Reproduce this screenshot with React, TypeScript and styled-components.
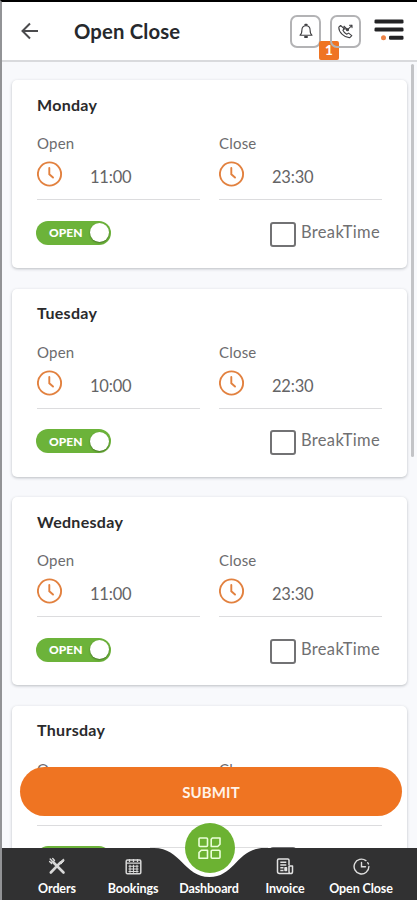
import React from "react";
import styled, { createGlobalStyle } from "styled-components";

const Global = createGlobalStyle`
  * { box-sizing: border-box; }
  html, body { margin: 0; padding: 0; overflow: hidden; }
  body { font-family: Lato, "Open Sans", sans-serif; background: #f8f9fc; }
  button { font-family: inherit; border: 0; padding: 0; background: none; }
`;

const Screen = styled.div`
  position: relative;
  display: flex;
  flex-direction: column;
  width: 417px;
  height: 900px;
  overflow: hidden;
  border-top: 2px solid #000;
  border-left: 2px solid #929396;
  background: #f8f9fc;
`;

const Header = styled.header`
  display: flex;
  align-items: center;
  flex: none;
  height: 60px;
  padding: 0 13px 0 18px;
  background: #fff;
  border-bottom: 2px solid #d9dadd;
`;

const BackButton = styled.button`
  display: flex;
  width: 20px;
  height: 20px;
`;

const PageTitle = styled.h1`
  flex: 1;
  margin: 0 0 0 34px;
  font-size: 20.3px;
  line-height: 26px;
  font-weight: 700;
  letter-spacing: 0.15px;
  color: #26292d;
`;

const Tools = styled.div`
  display: flex;
  align-items: center;
`;

const ToolButton = styled.button`
  position: relative;
  display: flex;
  align-items: center;
  justify-content: center;
  width: 31px;
  height: 33px;
  margin-right: 9px;
  border: 2px solid #b3b3b5;
  border-radius: 7px;
`;

const Badge = styled.span`
  position: absolute;
  left: 27px;
  top: 24px;
  width: 20px;
  height: 19px;
  border-radius: 2px;
  background: #ef7423;
  color: #fff;
  font-size: 13.5px;
  line-height: 19px;
  font-weight: 900;
  text-align: center;
`;

const MenuIcon = styled.svg`
  display: block;
  margin: 0 0 2px 4px;
`;

const List = styled.main`
  display: flex;
  flex-direction: column;
  flex: 1;
  gap: 20.6px;
  padding: 18px 10px 0 10px;
  overflow: hidden;
`;

const Card = styled.section`
  flex: none;
  width: 395px;
  height: 188px;
  padding: 13.5px 25px 0;
  border-radius: 5px;
  background: #fff;
  box-shadow: 0 1px 3px rgba(60, 65, 75, 0.32);
`;

const Day = styled.h2`
  margin: 0;
  height: 22px;
  font-size: 16px;
  line-height: 22px;
  font-weight: 700;
  letter-spacing: 0.3px;
  color: #2a2a2c;
`;

const Times = styled.div`
  display: grid;
  grid-template-columns: 163px 163px;
  gap: 19px;
  margin-top: 17.5px;
`;

const Field = styled.div`
  height: 67px;
  border-bottom: 1.5px solid #dcdcde;
`;

const FieldLabel = styled.div`
  font-size: 15px;
  line-height: 20px;
  letter-spacing: 0.2px;
  color: #6c6c6e;
`;

const FieldValue = styled.div`
  display: flex;
  align-items: center;
  gap: 27px;
  height: 26px;
  margin-top: 8px;
  font-size: 16.5px;
  letter-spacing: -0.2px;
  color: #646466;
`;

const TimeText = styled.span`
  padding-top: 6px;
`;

const Controls = styled.div`
  display: flex;
  justify-content: space-between;
  margin: 20.6px 2px 0 -1px;
`;

const Toggle = styled.button`
  display: flex;
  align-items: center;
  justify-content: space-between;
  width: 75px;
  height: 24px;
  padding: 0 2px 0 13px;
  border-radius: 12px;
  background: #6cb33a;
  color: #fff;
  font-size: 12px;
  font-weight: 900;
`;

const Knob = styled.span`
  width: 19px;
  height: 19px;
  border-radius: 50%;
  background: #fff;
  box-shadow: 0 1px 2px rgba(0, 0, 0, 0.35);
`;

const BreakTime = styled.label`
  display: flex;
  gap: 5px;
  font-size: 16.5px;
  line-height: 23px;
  letter-spacing: 0.35px;
  color: #707072;
`;

const CheckBox = styled.span`
  width: 26px;
  height: 25px;
  margin-top: 1px;
  border: 2px solid #727274;
  border-radius: 3px;
`;

const ScrollThumb = styled.div`
  position: absolute;
  top: 62px;
  right: 3px;
  width: 3px;
  height: 393px;
  border-radius: 2px;
  background: #c3c4c7;
`;

const Submit = styled.button`
  position: absolute;
  left: 18px;
  top: 765px;
  width: 382px;
  height: 49px;
  border-radius: 25px;
  background: #ef7422;
  color: #fff3e8;
  font-size: 15px;
  font-weight: 700;
  letter-spacing: 0.1px;
`;

const BottomBar = styled.nav`
  position: absolute;
  left: -2px;
  bottom: 0;
  width: 417px;
  height: 53px;
`;

const BarShape = styled.svg`
  position: absolute;
  inset: 0;
`;

const NavItems = styled.div`
  position: relative;
  display: grid;
  grid-template-columns: repeat(5, 76px);
  padding-left: 19px;
  height: 53px;
`;

const NavItem = styled.div`
  display: flex;
  flex-direction: column;
  align-items: center;
  justify-content: flex-end;
  padding-bottom: 4px;
  color: #fff;
  font-size: 12.5px;
  line-height: 15px;
  font-weight: 700;
  letter-spacing: -0.1px;
  white-space: nowrap;
  svg { margin-bottom: 6px; }
`;

const DashButton = styled.button`
  position: absolute;
  left: 184.500px;
  top: -24px;
  display: flex;
  align-items: center;
  justify-content: center;
  width: 50px;
  height: 50px;
  border-radius: 50%;
  background: #6cb232;
`;

const Clock = () => (
  <svg width="26" height="26" viewBox="0 0 26 26" fill="none" stroke="#e2813f" strokeWidth="1.9" strokeLinecap="round">
    <circle cx="12.5" cy="13" r="11.6" />
    <path d="M12.3 7v6.2l3.7 3.3" />
  </svg>
);

const BellIcon = () => (
  <svg width="16" height="18" viewBox="0 0 16 18" fill="none" stroke="#404043" strokeWidth="1.1" strokeLinecap="round" strokeLinejoin="round">
    <path d="M2 13.2h12c-1.7-1-1.9-2.3-1.9-5.1C12.1 5.400 10.600 3.700 8 3.700S3.900 5.400 3.900 8.100c0 2.800-.2 4.100-1.900 5.100z" />
    <path d="M7.300 2.800h1.400M7 15h2" strokeWidth="2" />
  </svg>
);

const CallIcon = () => (
  <svg width="17" height="17" viewBox="0 0 17 17" fill="none" stroke="#404043" strokeWidth="1.1" strokeLinecap="round" strokeLinejoin="round">
    <path d="M3.600 2.500 1.800 4.200C1.600 9 7.500 15 12.800 14.600l2-2-3.200-2.500-1.900 1.200C8.200 10.500 6.700 9 5.900 7.300l1.200-1.600z" />
    <path d="M7 3.200v2.800h2.600M7.200 3.400l3.400 3.200 4.400-4.200M12.500 2.200H15v2.400" />
    <circle cx="10.500" cy="6.800" r="1" fill="#404043" />
  </svg>
);

const OrdersIcon = () => (
  <svg width="18" height="18" viewBox="0 0 18 18" stroke="#d8d8d8" fill="none" strokeLinecap="round">
    <path d="M5.500 5.500 15.500 15.500M12.300 5.700 2.800 15.500" strokeWidth="2.600" />
    <path d="M2.200 2l2.300 2.500M4.700 1.500l1.800 2M1.600 4.500l2 2M3.300 5.500l2.600-1.500" strokeWidth="1.400" />
    <path d="m12.300 4.800 3.300-2.700.4 1.800-2.900 3z" fill="#d8d8d8" />
  </svg>
);

const BookingsIcon = () => (
  <svg width="17" height="17" viewBox="0 0 17 17" stroke="#d8d8d8" fill="none">
    <rect x="1.200" y="2" width="14.600" height="13.800" rx="1.200" strokeWidth="1.500" />
    <path d="M4.500 1v3M8.500 1v3M12.500 1v3M1 5.200h15" strokeWidth="1.300" />
    <path d="M3.500 8.300h10M3.500 11h10M3.500 13.500h10M5 6.800v8M8.500 6.800v8M12 6.800v8" strokeWidth="1.100" />
  </svg>
);

const InvoiceIcon = () => (
  <svg width="18" height="17" viewBox="0 0 18 17" stroke="#e2e2e2" fill="none" strokeWidth="1.500" strokeLinejoin="round">
    <path d="M13 7V2.200c0-.7-.5-1.200-1.200-1.200H2.700C2 1 1.500 1.500 1.500 2.200v11.300c0 1.200.8 2 2 2h11.300c1 0 1.700-.8 1.700-1.800V8H13v5.500c0 1.200.6 2 1.600 2" />
    <path d="M4.300 4.300h6M4.300 7h6M4.300 9.800h3.200M4.300 12.500h3.200M9 9.800h1.500v2.700H9z" />
  </svg>
);

const NavClockIcon = () => (
  <svg width="17" height="17" viewBox="0 0 17 17" stroke="#dedede" fill="none" strokeWidth="1.400" strokeLinecap="round">
    <path d="M15.900 8.500a7.400 7.400 0 1 1-3-5.900M14.800 4.700l.6 1.200" />
    <path d="M8.500 4.500v4.300h4" />
  </svg>
);

const DashIcon = () => (
  <svg width="25" height="25" viewBox="0 0 25 25" stroke="#eaffd9" fill="none" strokeWidth="1.600" strokeLinejoin="round">
    <rect x="2" y="2" width="8.500" height="8.500" rx="1" />
    <path d="M15.300 2H23v6.200l-2.300 2.300h-6.500V3.200z" />
    <path d="M4.300 14.200h6.200v8H2v-5.700z" />
    <rect x="14.200" y="14.200" width="8.800" height="8" rx="1" />
  </svg>
);

const days = [
  { name: "Monday", open: "11:00", close: "23:30" },
  { name: "Tuesday", open: "10:00", close: "22:30" },
  { name: "Wednesday", open: "11:00", close: "23:30" },
  { name: "Thursday", open: "11:00", close: "23:30" },
];

const TimeField = ({ label, value }: { label: string; value: string }) => (
  <Field>
    <FieldLabel>{label}</FieldLabel>
    <FieldValue>
      <Clock />
      <TimeText>{value}</TimeText>
    </FieldValue>
  </Field>
);

export default function App() {
  return (
    <Screen>
      <Global />
      <Header>
        <BackButton aria-label="Back">
          <svg width="20" height="20" viewBox="0 0 20 20" fill="none" stroke="#4b4b4d" strokeWidth="2">
            <path d="M18 10H2.500M10 2.500 2.500 10l7.500 7.500" />
          </svg>
        </BackButton>
        <PageTitle>Open Close</PageTitle>
        <Tools>
          <ToolButton aria-label="Notifications">
            <BellIcon />
            <Badge>1</Badge>
          </ToolButton>
          <ToolButton aria-label="Calls">
            <CallIcon />
          </ToolButton>
          <MenuIcon width="30" height="22" viewBox="0 0 30 22" fill="#222224">
            <rect x="0.500" y="0.500" width="29" height="4" rx="1.300" />
            <rect x="0.500" y="8.600" width="29" height="4" rx="1.300" />
            <rect x="15" y="16.700" width="14.500" height="4" rx="1.300" />
            <circle cx="9.500" cy="18.800" r="2.500" fill="#ec8245" />
          </MenuIcon>
        </Tools>
      </Header>
      <List>
        {days.map((d) => (
          <Card key={d.name}>
            <Day>{d.name}</Day>
            <Times>
              <TimeField label="Open" value={d.open} />
              <TimeField label="Close" value={d.close} />
            </Times>
            <Controls>
              <Toggle>
                OPEN
                <Knob />
              </Toggle>
              <BreakTime>
                <CheckBox />
                BreakTime
              </BreakTime>
            </Controls>
          </Card>
        ))}
      </List>
      <ScrollThumb />
      <Submit>SUBMIT</Submit>
      <BottomBar>
        <BarShape width="417" height="53" viewBox="0 0 417 53">
          <path d="M150 1h118v40H150z" fill="#fff" />
          <path d="M150 .5h118" stroke="#dededf" />
          <path d="M0 1h154C181 1 184 30 209.500 30S237 1 264 1h153v52H0z" fill="#313132" />
        </BarShape>
        <NavItems>
          <NavItem><OrdersIcon />Orders</NavItem>
          <NavItem><BookingsIcon />Bookings</NavItem>
          <NavItem>Dashboard</NavItem>
          <NavItem><InvoiceIcon />Invoice</NavItem>
          <NavItem><NavClockIcon />Open Close</NavItem>
        </NavItems>
        <DashButton aria-label="Dashboard">
          <DashIcon />
        </DashButton>
      </BottomBar>
    </Screen>
  );
}
